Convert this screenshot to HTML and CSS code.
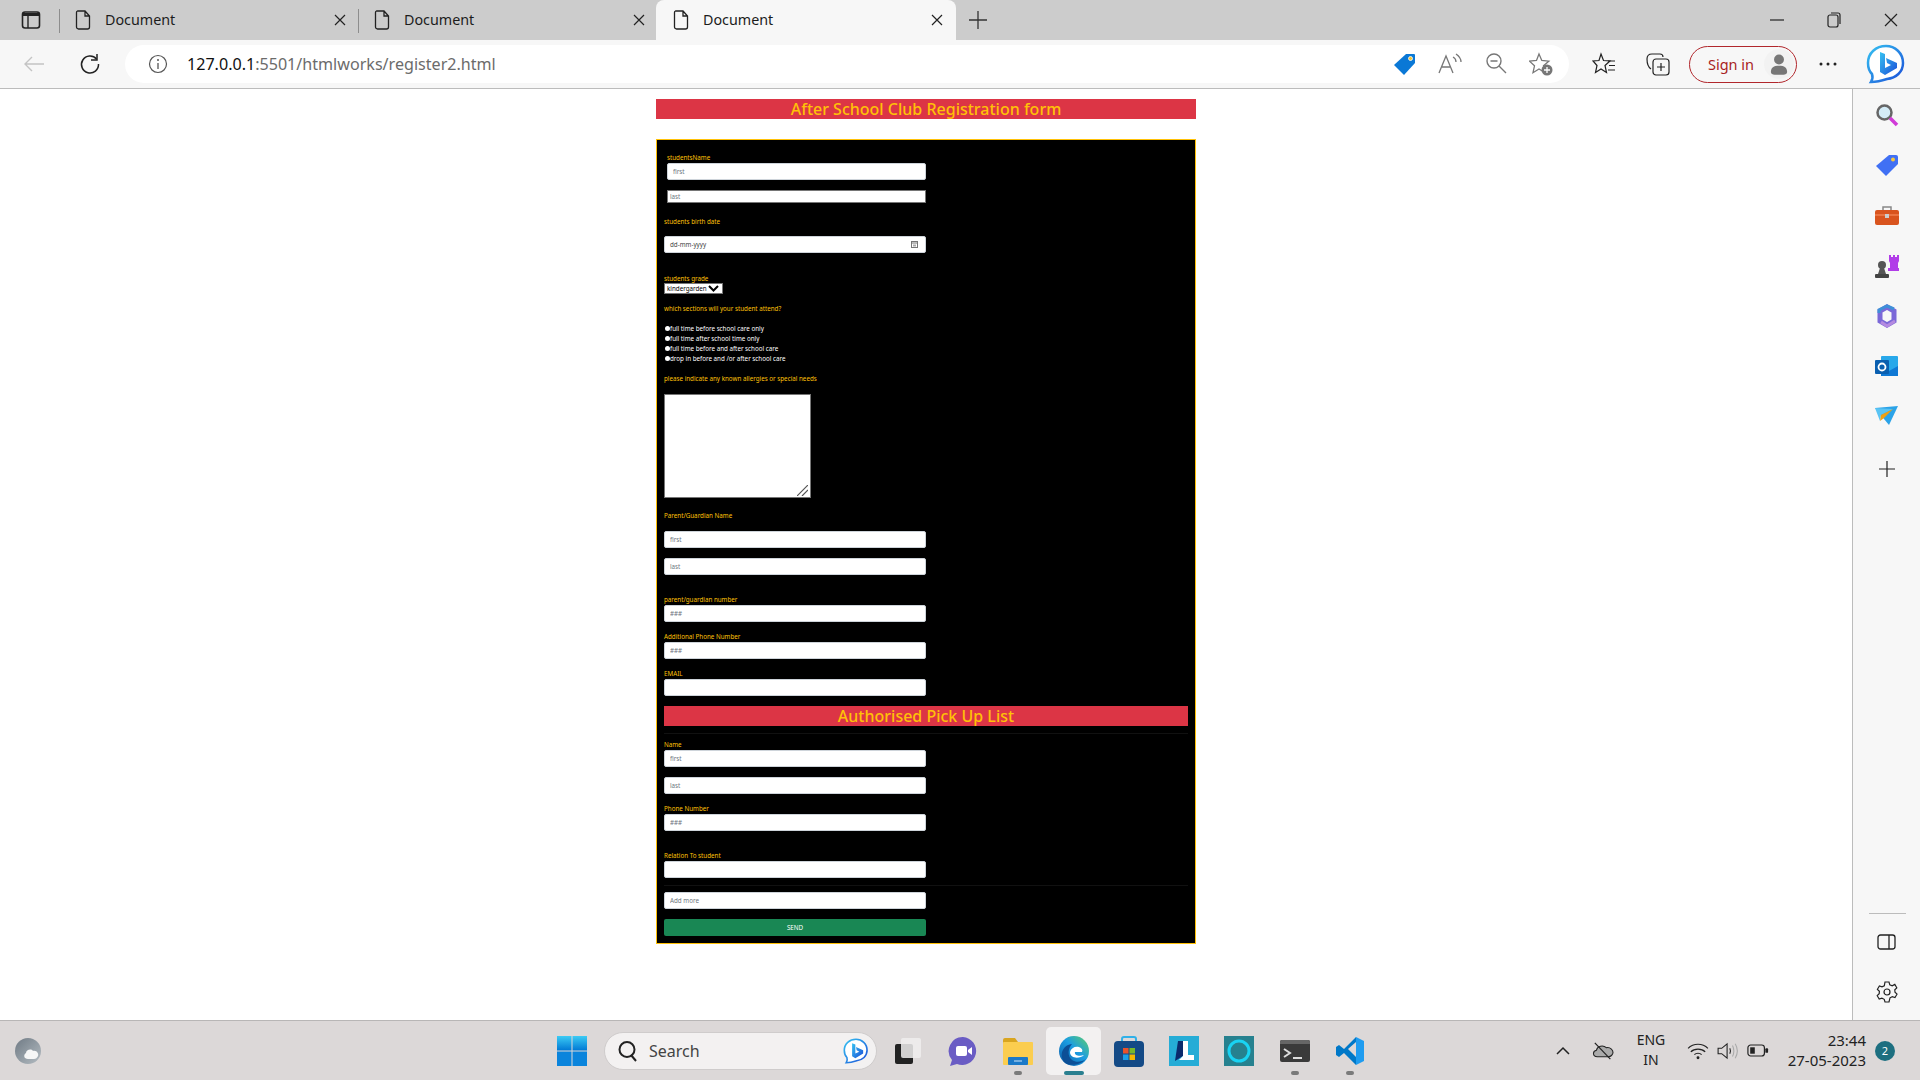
FILE: index.html
```html
<!DOCTYPE html>
<html>
<head>
	<title>Document</title>
	<link rel="stylesheet" href="styles.css">
</head>
<body>
	<svg class="defs" width="0" height="0">
		<defs>
			<linearGradient id="bingGrad" x1="0" y1="0" x2="1" y2="1">
				<stop offset="0" stop-color="#35c1f1"/>
				<stop offset="1" stop-color="#1b4fd8"/>
			</linearGradient>
			<linearGradient id="edgeGrad" x1="0" y1="1" x2="1" y2="0">
				<stop offset="0" stop-color="#0c59a4"/>
				<stop offset=".55" stop-color="#1b9de2"/>
				<stop offset="1" stop-color="#5fd068"/>
			</linearGradient>
			<linearGradient id="winGrad" x1="0" y1="0" x2="0" y2="1">
				<stop offset="0" stop-color="#3ccbf4"/>
				<stop offset="1" stop-color="#0078d4"/>
			</linearGradient>
			<linearGradient id="weatherGrad" x1="0" y1="0" x2="1" y2="1">
				<stop offset="0" stop-color="#6f7a84"/>
				<stop offset="1" stop-color="#b4bcc2"/>
			</linearGradient>
			<symbol id="doc" viewBox="0 0 16 20">
				<path d="M2.5 1H10l4.500 5V17a2 2 0 0 1-2 2h-9a2 2 0 0 1-2-2V2.500A1.500 1.500 0 0 1 2.500 1ZM10 1v5h4.500" fill="none" stroke="#222" stroke-width="1.300"/>
			</symbol>
			<symbol id="bing" viewBox="0 0 40 40">
				<path d="M20 2C29 2 37 9 37 19C37 28 30 34 21 35C15 37 9 38 5 38C7 35 7 33 6 30C3 27 2 23 2 19C2 9 10 2 20 2Z" fill="#fff" stroke="url(#bingGrad)" stroke-width="2.500"/>
				<path d="M14 8L19 10V24L25 21L21 19L20 14L31 19V24L19 31L14 28Z" fill="url(#bingGrad)"/>
			</symbol>
		</defs>
	</svg>

	<div class="tabstrip">
		<div class="panes-btn">
			<svg width="20" height="20" viewBox="0 0 20 20"><rect x="1.500" y="2" width="17" height="16" rx="2.500" fill="none" stroke="#222" stroke-width="1.600"/><path d="M2 3h16v3H2z" fill="#222"/><path d="M7 6v12" stroke="#222" stroke-width="1.400"/></svg>
		</div>
		<div class="tab">
			<svg class="doc-icon" width="16" height="20"><use href="#doc"/></svg>
			<span class="tab-title">Document</span>
			<svg class="tab-close" width="12" height="12" viewBox="0 0 12 12"><path d="M1 1l10 10M11 1L1 11" stroke="#222" stroke-width="1.200"/></svg>
		</div>
		<div class="tab">
			<svg class="doc-icon" width="16" height="20"><use href="#doc"/></svg>
			<span class="tab-title">Document</span>
			<svg class="tab-close" width="12" height="12" viewBox="0 0 12 12"><path d="M1 1l10 10M11 1L1 11" stroke="#222" stroke-width="1.200"/></svg>
		</div>
		<div class="tab tab-active">
			<svg class="doc-icon" width="16" height="20"><use href="#doc"/></svg>
			<span class="tab-title">Document</span>
			<svg class="tab-close" width="12" height="12" viewBox="0 0 12 12"><path d="M1 1l10 10M11 1L1 11" stroke="#222" stroke-width="1.200"/></svg>
		</div>
		<div class="new-tab">
			<svg width="18" height="18" viewBox="0 0 18 18"><path d="M9 0v18M0 9h18" stroke="#333" stroke-width="1.300"/></svg>
		</div>
		<div class="window-btns">
			<svg width="14" height="14" viewBox="0 0 14 14"><path d="M0 7h14" stroke="#222" stroke-width="1.200"/></svg>
			<svg width="14" height="16" viewBox="0 0 14 16"><rect x="1" y="3" width="10" height="12" rx="2" fill="none" stroke="#222" stroke-width="1.200"/><path d="M4 1h7a2 2 0 0 1 2 2v9" fill="none" stroke="#222" stroke-width="1.200"/></svg>
			<svg width="14" height="14" viewBox="0 0 14 14"><path d="M1 1l12 12M13 1L1 13" stroke="#222" stroke-width="1.200"/></svg>
		</div>
	</div>

	<div class="toolbar">
		<div class="tool">
			<svg width="22" height="18" viewBox="0 0 22 18"><path d="M21 9H2M9 2L2 9l7 7" fill="none" stroke="#c4c4c4" stroke-width="1.400"/></svg>
		</div>
		<div class="tool">
			<svg width="22" height="22" viewBox="0 0 22 22"><path d="M17.500 6A8.500 8.500 0 1 0 19.500 11" fill="none" stroke="#222" stroke-width="1.500"/><path d="M18 1v6h-6" fill="none" stroke="#222" stroke-width="1.500"/></svg>
		</div>
		<div class="address">
			<svg class="info-icon" width="22" height="22" viewBox="0 0 22 22"><circle cx="11" cy="11" r="8.500" fill="none" stroke="#555" stroke-width="1.200"/><path d="M11 10v6" stroke="#555" stroke-width="1.300"/><circle cx="11" cy="7" r="1" fill="#555"/></svg>
			<span class="url"><span class="url-host">127.0.0.1</span>:5501/htmlworks/register2.html</span>
			<div class="address-tools">
				<div class="addr-tool">
					<svg width="24" height="24" viewBox="0 0 24 24"><path d="M13 2h8a1 1 0 0 1 1 1v8L11 23 1 13Z" fill="#0a78d6"/><circle cx="17.500" cy="6.500" r="2" fill="#f4c430" stroke="#fff" stroke-width=".8"/></svg>
				</div>
				<div class="addr-tool">
					<svg width="24" height="22" viewBox="0 0 24 22"><path d="M1 21L8 4l7 17M4 15h8" fill="none" stroke="#777" stroke-width="1.300"/><path d="M15 5c2 1 3 2 3 5M18 2c3 2 5 4 5 8" fill="none" stroke="#777" stroke-width="1.300"/></svg>
				</div>
				<div class="addr-tool">
					<svg width="22" height="22" viewBox="0 0 22 22"><circle cx="9" cy="9" r="7" fill="none" stroke="#777" stroke-width="1.400"/><path d="M14 14l7 7M5.500 9h7" stroke="#777" stroke-width="1.400"/></svg>
				</div>
				<div class="addr-tool">
					<svg width="24" height="24" viewBox="0 0 24 24"><path d="M10 2l2.800 6.500 7 .7-5.300 4.600 1.500 6.900L10 17l-6 3.700 1.500-6.900L.5 9.200l7-.7Z" fill="none" stroke="#777" stroke-width="1.300"/><circle cx="18" cy="18" r="5.500" fill="#777"/><path d="M18 15v6M15 18h6" stroke="#fff" stroke-width="1.300"/></svg>
				</div>
			</div>
		</div>
		<div class="tool tool-fav">
			<svg width="24" height="24" viewBox="0 0 24 24"><path d="M9 2l2.500 6.500 6.500.5-5 4.500 1.500 7L9 17l-5.500 3.500 1.500-7-4-4.500 6-.5Z" fill="none" stroke="#222" stroke-width="1.200"/><path d="M16 9h7M17 13.500h6M16 18h7" stroke="#222" stroke-width="1.200"/></svg>
		</div>
		<div class="tool tool-coll">
			<svg width="24" height="24" viewBox="0 0 24 24"><path d="M5 17C2 15 1 12 1 7c0-3 2-5 5-5h8c2 0 3 1 3 3" fill="none" stroke="#222" stroke-width="1.200"/><rect x="7" y="7" width="16" height="16" rx="3" fill="none" stroke="#222" stroke-width="1.200"/><path d="M15 11v8M11 15h8" stroke="#222" stroke-width="1.200"/></svg>
		</div>
		<div class="signin">
			<span class="signin-text">Sign in</span>
			<span class="avatar">
				<svg width="18" height="22" viewBox="0 0 20 24"><circle cx="10" cy="7" r="5.500" fill="#777"/><path d="M1 21c0-5 3-7 9-7s9 2 9 7c0 2-2 3-4 3H5c-2 0-4-1-4-3Z" fill="#777"/></svg>
			</span>
		</div>
		<div class="tool tool-more">
			<svg width="18" height="4" viewBox="0 0 18 4"><circle cx="2" cy="2" r="1.500" fill="#222"/><circle cx="9" cy="2" r="1.500" fill="#222"/><circle cx="16" cy="2" r="1.500" fill="#222"/></svg>
		</div>
		<svg class="bing-btn" width="40" height="40"><use href="#bing"/></svg>
	</div>

	<div class="main">
		<div class="page">
			<div class="container">
				<h1 class="title">After School Club Registration form</h1>
				<form class="regform">
					<label class="lbl indent">studentsName</label>
					<input class="input indent-input" type="text" placeholder="first">
					<input class="input input-short indent-input mt-10" type="text" placeholder="last">

					<label class="lbl mt-13 mb-10">students birth date</label>
					<div class="input date-field">
						<span>dd-mm-yyyy</span>
						<svg width="7" height="7" viewBox="0 0 7 7"><rect x=".5" y=".5" width="6" height="6" fill="none" stroke="#777"/><path d="M0 2h7" stroke="#777"/><path d="M2 3.500h3v2H2z" fill="#aaa"/></svg>
					</div>

					<label class="lbl mt-20">students grade</label>
					<select class="grade">
						<option>kindergarden</option>
					</select>

					<p class="lbl mt-9">which sections will your student attend?</p>
					<div class="sections">
						<label class="section"><input type="radio" name="section">full time before school care only</label>
						<label class="section"><input type="radio" name="section">full time after school time only</label>
						<label class="section"><input type="radio" name="section">full time before and after school care</label>
						<label class="section"><input type="radio" name="section">drop in before and /or after school care</label>
					</div>

					<label class="lbl mt-10">please indicate any known allergies or special needs</label>
					<div class="notes-wrap">
						<textarea class="notes"></textarea>
						<svg class="notes-grip" width="11" height="11" viewBox="0 0 11 11"><path d="M0 11L11 0M5 11l6-6" stroke="#555" stroke-width="1.200"/></svg>
					</div>

					<label class="lbl mt-12 mb-11">Parent/Guardian Name</label>
					<input class="input" type="text" placeholder="first">
					<input class="input mt-10" type="text" placeholder="last">

					<label class="lbl mt-19">parent/guardian number</label>
					<input class="input" type="text" placeholder="###">
					<label class="lbl mt-9">Additional Phone Number</label>
					<input class="input" type="text" placeholder="###">
					<label class="lbl mt-9">EMAIL</label>
					<input class="input" type="text">

					<h2 class="subtitle">Authorised Pick Up List</h2>
					<hr class="rule">

					<label class="lbl mt-5">Name</label>
					<input class="input" type="text" placeholder="first">
					<input class="input mt-10" type="text" placeholder="last">
					<label class="lbl mt-9">Phone Number</label>
					<input class="input" type="text" placeholder="###">
					<label class="lbl mt-19">Relation To student</label>
					<input class="input" type="text">
					<hr class="rule">
					<input class="input mt-6" type="text" placeholder="Add more">
					<button class="send" type="submit">SEND</button>
				</form>
			</div>
		</div>

		<div class="sidebar">
			<div class="side-btn">
				<svg width="24" height="24" viewBox="0 0 24 24"><circle cx="9.500" cy="9.500" r="7" fill="#d4ecf7" stroke="#666" stroke-width="2.500"/><path d="M15 15l7 7" stroke="#d13bd8" stroke-width="3.500"/></svg>
			</div>
			<div class="side-btn">
				<svg width="24" height="24" viewBox="0 0 24 24"><path d="M14 2h7a2 2 0 0 1 2 2v7L11 23 1 13Z" fill="#4070f4"/><circle cx="18" cy="6.500" r="2" fill="#f5c842"/></svg>
			</div>
			<div class="side-btn">
				<svg width="24" height="20" viewBox="0 0 24 20"><path d="M8 5V2h8v3" fill="none" stroke="#888" stroke-width="1.500"/><rect y="5" width="24" height="15" rx="2" fill="#d9541e"/><path d="M0 10h24" stroke="#f08050" stroke-width="1.500"/><rect x="10" y="9" width="4" height="4" fill="#ccc"/></svg>
			</div>
			<div class="side-btn">
				<svg width="24" height="24" viewBox="0 0 24 24"><path d="M14 1h2v2h2V1h2v2h2V1h2v6l-1 2v5h2v3H13v-3h2V9l-1-2Z" fill="#b13de8"/><circle cx="7" cy="11" r="4" fill="#555"/><path d="M5 14h4l2 6H3Z" fill="#555"/><rect y="20" width="14" height="4" rx="1" fill="#444"/></svg>
			</div>
			<div class="side-btn">
				<svg width="22" height="24" viewBox="0 0 22 24"><path d="M11 3l7 4v10l-7 4-7-4V7Z" fill="none" stroke="#7b68d8" stroke-width="5"/><path d="M3 9V6l8-4 7 3" fill="none" stroke="#3f8fd8" stroke-width="3"/><path d="M5 18l6 4 8-5" fill="none" stroke="#b58ae0" stroke-width="3"/></svg>
			</div>
			<div class="side-btn">
				<svg width="24" height="24" viewBox="0 0 24 24"><rect x="6" y="2" width="17" height="20" rx="1" fill="#28a8ea"/><path d="M6 12l8 5 9-5v10H6Z" fill="#0f78d4"/><rect y="6" width="14" height="14" rx="1" fill="#0a5fb0"/><circle cx="7" cy="13" r="3.500" fill="none" stroke="#fff" stroke-width="1.800"/></svg>
			</div>
			<div class="side-btn">
				<svg width="24" height="20" viewBox="0 0 24 20"><path d="M0 2l23-2-9 19-5-6Z" fill="#2ba3e8"/><path d="M0 2l18 1L6 9 5 15Z" fill="#5ac4f4"/><path d="M18 3L6 9 5 15l4-3Z" fill="#f0a010"/></svg>
			</div>
			<div class="side-btn side-plus">
				<svg width="16" height="16" viewBox="0 0 16 16"><path d="M8 0v16M0 8h16" stroke="#222" stroke-width="1.200"/></svg>
			</div>
			<div class="side-bottom">
				<div class="side-rule"></div>
				<div class="side-btn">
					<svg width="20" height="18" viewBox="0 0 20 18"><rect x="1" y="2" width="17" height="14" rx="2.500" fill="none" stroke="#222" stroke-width="1.300"/><path d="M12 2v14" stroke="#222" stroke-width="1.300"/></svg>
				</div>
				<div class="side-btn">
					<svg width="22" height="22" viewBox="0 0 22 22"><path d="M9 1h4l.8 2.800 2.400 1 2.600-1.400 2 3.400-2 2 .2 2.400 2 2-2 3.400-2.700-1-2.300 1.200L13 21H9l-.8-2.700-2.300-1.200-2.700 1-2-3.400 2-2 .2-2.400-2-2 2-3.400L6 5.800l2.300-1Z" fill="none" stroke="#222" stroke-width="1.200"/><circle cx="11" cy="11" r="3" fill="none" stroke="#222" stroke-width="1.200"/></svg>
				</div>
			</div>
		</div>
	</div>

	<div class="taskbar">
		<svg class="weather" width="26" height="26" viewBox="0 0 26 26"><ellipse cx="13" cy="13" rx="13" ry="13" fill="url(#weatherGrad)"/><path d="M13 21c-4 0-5-4-2-6 0-3 5-5 7-2 4-1 6 3 5 5-1 2-2 3-4 3Z" fill="#f6f6f6"/></svg>
		<svg class="start" width="30" height="30" viewBox="0 0 30 30"><rect width="14.500" height="14.500" fill="url(#winGrad)"/><rect x="15.500" width="14.500" height="14.500" fill="url(#winGrad)"/><rect y="15.500" width="14.500" height="14.500" fill="#0a84dc"/><rect x="15.500" y="15.500" width="14.500" height="14.500" fill="#0a84dc"/></svg>
		<div class="search">
			<svg width="22" height="22" viewBox="0 0 22 22"><circle cx="10" cy="9.500" r="7.500" fill="none" stroke="#222" stroke-width="2"/><path d="M14 15l5 6" stroke="#222" stroke-width="2"/></svg>
			<span class="search-text">Search</span>
			<svg class="search-bing" width="26" height="26"><use href="#bing"/></svg>
		</div>
		<div class="task">
			<svg width="30" height="30" viewBox="0 0 30 30"><rect x="2" y="8" width="18" height="20" rx="2" fill="#222"/><rect x="8" y="2" width="20" height="20" rx="2" fill="#f0eeee" fill-opacity=".85"/></svg>
		</div>
		<div class="task">
			<svg width="30" height="30" viewBox="0 0 30 30"><path d="M15 1a14 14 0 1 1-6 27L2 30l2-6A14 14 0 0 1 15 1Z" fill="#6a5cc4"/><rect x="8" y="10" width="11" height="10" rx="2" fill="#fff"/><path d="M20 14l4-3v8l-4-3Z" fill="#fff"/></svg>
		</div>
		<div class="task running">
			<svg width="32" height="28" viewBox="0 0 32 28"><path d="M1 3a2 2 0 0 1 2-2h10l3 4h14v8H1Z" fill="#d9a520"/><rect x="1" y="5" width="30" height="23" rx="1" fill="#fbcd4f"/><rect x="6" y="20" width="20" height="8" rx="1" fill="#1b79c8"/><path d="M12 24h8" stroke="#cfe6f8" stroke-width="1"/></svg>
		</div>
		<div class="task task-active running">
			<svg width="32" height="32" viewBox="0 0 32 32"><circle cx="16" cy="16" r="15" fill="url(#edgeGrad)"/><path d="M6 27c-5-8-1-17 8-18-4 4-5 12 0 16 4 3 10 2 14-1-5 6-17 8-22 3Z" fill="#0c4f96"/><path d="M12 17c1-4 5-6 9-5 3 1 4 3 3 5h-7c-1 3 4 5 9 3-4 4-14 4-14-3Z" fill="#fff"/></svg>
		</div>
		<div class="task">
			<svg width="30" height="32" viewBox="0 0 30 32"><path d="M8 8V4a2 2 0 0 1 2-2h10a2 2 0 0 1 2 2v4" fill="none" stroke="#30b0e8" stroke-width="2"/><rect y="6" width="30" height="26" rx="4" fill="#144a86"/><rect x="9" y="13" width="5.500" height="5.500" fill="#e8532b"/><rect x="15.500" y="13" width="5.500" height="5.500" fill="#78b82a"/><rect x="9" y="19.500" width="5.500" height="5.500" fill="#1aa0e8"/><rect x="15.500" y="19.500" width="5.500" height="5.500" fill="#f5b800"/></svg>
		</div>
		<div class="task">
			<svg width="30" height="30" viewBox="0 0 30 30"><rect width="30" height="30" fill="#25acd6"/><path d="M9 5h5v15l-8 5Z" fill="#0b2a6b"/><path d="M14 5h5v14h6v5H10l4-4Z" fill="#fff"/></svg>
		</div>
		<div class="task">
			<svg width="30" height="30" viewBox="0 0 30 30"><rect width="30" height="30" fill="#26818f"/><circle cx="15" cy="15" r="10" fill="none" stroke="#19d3f3" stroke-width="3"/></svg>
		</div>
		<div class="task running">
			<svg width="30" height="26" viewBox="0 0 30 26"><rect width="30" height="22" y="2" rx="2" fill="#3a3a3a"/><path d="M0 4a2 2 0 0 1 2-2h26a2 2 0 0 1 2 2v2H0Z" fill="#666"/><path d="M4 11l6 4-6 4" fill="none" stroke="#ddd" stroke-width="2"/><path d="M13 20h9" stroke="#ddd" stroke-width="2"/></svg>
		</div>
		<div class="task running">
			<svg width="30" height="30" viewBox="0 0 30 30"><path d="M21 1l8 4v20l-8 4Z" fill="#1f9cf0"/><path d="M21 1L9 13 4 9l-3 2v8l3 2 5-4 12 12v-8l-8-8 8-7Z" fill="#0078c8"/></svg>
		</div>

		<svg class="tray-caret" width="20" height="10" viewBox="0 0 20 10"><path d="M4 8l6-6 6 6" fill="none" stroke="#222" stroke-width="1.500"/></svg>
		<svg class="tray-cloud" width="22" height="18" viewBox="0 0 26 22"><path d="M6 18c-6 0-6-7-1-8 1-5 8-7 12-3 5-1 9 3 8 7-1 3-3 4-5 4Z" fill="#aaa" stroke="#222" stroke-width="1.300"/><path d="M3 1l19 20" stroke="#222" stroke-width="1.500"/></svg>
		<div class="tray-lang"><span>ENG</span><span>IN</span></div>
		<svg class="tray-wifi" width="22" height="18" viewBox="0 0 24 20"><path d="M1 7c6-6 16-6 22 0M4 11c4-4 12-4 16 0M8 14c2-2 6-2 8 0" fill="none" stroke="#222" stroke-width="1.300"/><circle cx="12" cy="17.500" r="1.600" fill="#222"/></svg>
		<svg class="tray-sound" width="22" height="18" viewBox="0 0 24 20"><path d="M1 7h4l6-5v16l-6-5H1Z" fill="none" stroke="#222" stroke-width="1.200"/><path d="M14 7c1 2 1 4 0 6" fill="none" stroke="#222" stroke-width="1.200"/><path d="M17 4c2 4 2 8 0 12M20 2c3 5 3 11 0 16" fill="none" stroke="#aaa" stroke-width="1.200"/></svg>
		<svg class="tray-battery" width="22" height="13" viewBox="0 0 24 14"><rect x="1" y="1" width="18" height="12" rx="3" fill="none" stroke="#222" stroke-width="1.300"/><rect x="3.500" y="3.500" width="5" height="7" fill="#222"/><rect x="20" y="4.500" width="3" height="5" rx="1" fill="#222"/></svg>
		<div class="clock"><span>23:44</span><span>27-05-2023</span></div>
		<div class="badge">2</div>
	</div>
</body>
</html>
```

FILE: styles.css
```css
* {
  box-sizing: border-box;
}

body {
  margin: 0;
  height: 1080px;
  overflow: hidden;
  display: flex;
  flex-direction: column;
  font-family: "Noto Sans", "Open Sans", sans-serif;
  background: #fff;
}

.defs {
  position: absolute;
}

/* Browser tabs */
.tabstrip {
  height: 40px;
  flex: none;
  display: flex;
  background: #cccccc;
}

.panes-btn {
  width: 60px;
  display: flex;
  align-items: center;
  padding-left: 21px;
  position: relative;
}

.panes-btn::after {
  content: "";
  position: absolute;
  right: 0;
  top: 9px;
  height: 24px;
  width: 1px;
  background: #8d8d8d;
}

.tab {
  width: 299px;
  display: flex;
  align-items: center;
  padding: 0 13px 0 15px;
  position: relative;
  font-size: 14.300px;
  color: #1c1c1c;
}

.tab::after {
  content: "";
  position: absolute;
  right: 0;
  top: 9px;
  height: 24px;
  width: 1px;
  background: #8d8d8d;
}

.tab-active {
  width: 300px;
  margin-left: -2px;
  background: #f7f7f7;
  border-radius: 8px 8px 0 0;
  padding-left: 17px;
  padding-right: 13px;
}

.tab-active::after {
  display: none;
}

.doc-icon {
  flex: none;
}

.tab-title {
  flex: 1;
  margin: -2px 0 0 14px;
}

.new-tab {
  margin-left: 13px;
  display: flex;
  align-items: center;
}

.window-btns {
  margin-left: auto;
  display: flex;
  align-items: center;
  gap: 43px;
  padding-right: 22px;
}

/* Address bar */
.toolbar {
  height: 49px;
  flex: none;
  display: flex;
  align-items: center;
  padding: 0 0 0 6px;
  background: #f7f7f7;
  border-bottom: 1px solid #bcbcbc;
}

.tool {
  width: 56px;
  display: flex;
  justify-content: center;
  align-items: center;
  flex: none;
}

.address {
  width: 1444px;
  height: 38px;
  margin-left: 7px;
  display: flex;
  align-items: center;
  padding-left: 22px;
  background: #fff;
  border-radius: 19px;
  flex: none;
}

.url {
  margin-left: 18px;
  font-size: 16.100px;
  color: #6b6b6b;
}

.url-host {
  color: #111;
}

.address-tools {
  margin-left: auto;
  display: flex;
  padding-right: 5px;
}

.addr-tool {
  width: 45.500px;
  display: flex;
  justify-content: center;
}

.tool-fav {
  width: 44px;
  margin-left: 13px;
}

.tool-coll {
  width: 44px;
  margin-left: 10px;
}

.signin {
  width: 108px;
  height: 37px;
  margin-left: 9px;
  flex: none;
  display: flex;
  align-items: center;
  padding-left: 18px;
  border: 1.500px solid #b1272c;
  border-radius: 19px;
}

.signin-text {
  font-size: 14.500px;
  color: #a81e23;
}

.avatar {
  width: 30px;
  height: 30px;
  margin-left: auto;
  margin-right: 2px;
  border-radius: 50%;
  background: #f2f2f2;
  display: flex;
  align-items: center;
  justify-content: center;
}

.tool-more {
  width: 44px;
  margin-left: 9px;
}

.bing-btn {
  margin-left: 16px;
  flex: none;
}

/* Page + side panel */
.main {
  flex: 1;
  display: flex;
  min-height: 0;
}

.page {
  flex: 1;
  padding-top: 10px;
}

.container {
  width: 540px;
  margin: 0 auto;
}

.title {
  margin: 0;
  height: 20px;
  background: #dc3545;
  color: #ffc107;
  font-size: 16px;
  font-weight: 500;
  line-height: 21px;
  text-align: center;
}

.regform {
  margin-top: 20px;
  height: 805px;
  padding: 12px 7px 6px 7px;
  background: #000;
  border: 1px solid #ffc107;
}

.lbl {
  display: block;
  margin: 0;
  height: 10px;
  font-size: 6.250px;
  line-height: 11px;
  color: #ffc107;
}

.indent {
  padding-left: 3px;
}

.input {
  display: block;
  width: 262px;
  height: 17px;
  margin-top: 1px;
  padding: 0 5px;
  background: #fff;
  border: 1px solid #ced4da;
  border-radius: 2px;
  font-family: inherit;
  font-size: 6.250px;
  color: #444;
}

.input::placeholder {
  color: #6c757d;
}

.indent-input {
  width: 259px;
  margin-left: 3px;
}

.input-short {
  height: 13px;
  padding: 0 2px;
  border: 1px solid #767676;
  border-radius: 0;
}

.date-field {
  display: flex;
  align-items: center;
  justify-content: space-between;
  padding-right: 7px;
}

.grade {
  display: block;
  width: 59px;
  height: 11px;
  padding: 0 0 0 2px;
  appearance: none;
  font-family: inherit;
  font-size: 6.250px;
  color: #000;
  background: #fff url("data:image/svg+xml,%3Csvg xmlns='http://www.w3.org/2000/svg' width='11' height='7' viewBox='0 0 11 7'%3E%3Cpath d='M1 1l4.500 4.500L10 1' fill='none' stroke='%23000' stroke-width='2'/%3E%3C/svg%3E") no-repeat right 3px center;
  border: 1px solid #767676;
  border-radius: 0;
}

.sections {
  margin-top: 10px;
}

.section {
  display: flex;
  align-items: center;
  height: 10px;
  font-size: 6.250px;
  color: #fff;
}

.section input {
  appearance: none;
  width: 5px;
  height: 5px;
  margin: 0 0 0 1px;
  background: #fff;
  border-radius: 50%;
}

.notes-wrap {
  position: relative;
  width: 147px;
  height: 104px;
  margin-top: 11px;
}

.notes {
  display: block;
  width: 100%;
  height: 100%;
  resize: none;
  background: #fff;
  border: 1px solid #767676;
}

.notes-grip {
  position: absolute;
  right: 3px;
  bottom: 2px;
}

.subtitle {
  margin: 10px 0 0;
  height: 20px;
  background: #dc3545;
  color: #ffc107;
  font-size: 16px;
  font-weight: 500;
  line-height: 21px;
  text-align: center;
}

.rule {
  margin: 7px 0 0;
  height: 1px;
  border: 0;
  background: #111;
}

.send {
  display: block;
  width: 262px;
  height: 17px;
  margin-top: 10px;
  padding: 0;
  background: #198754;
  border: 0;
  border-radius: 2px;
  font-family: inherit;
  font-size: 6.250px;
  color: #fff;
}

.mt-5 { margin-top: 5px; }
.mt-6 { margin-top: 6px; }
.mt-9 { margin-top: 9px; }
.mt-10 { margin-top: 10px; }
.mt-12 { margin-top: 12px; }
.mt-13 { margin-top: 13px; }
.mt-19 { margin-top: 19px; }
.mt-20 { margin-top: 20px; }
.mb-10 { margin-bottom: 10px; }
.mb-11 { margin-bottom: 11px; }

.sidebar {
  width: 68px;
  flex: none;
  display: flex;
  flex-direction: column;
  padding-top: 1px;
  background: #f7f7f7;
  border-left: 1px solid #bcbcbc;
}

.side-btn {
  height: 50.200px;
  flex: none;
  display: flex;
  align-items: center;
  justify-content: center;
}

.side-plus {
  margin-top: 3px;
}

.side-bottom {
  margin-top: auto;
  padding-bottom: 3px;
}

.side-rule {
  height: 1px;
  margin: 0 14px 3px 16px;
  background: #bcbcbc;
}

/* Windows taskbar */
.taskbar {
  height: 60px;
  flex: none;
  display: flex;
  align-items: center;
  padding-right: 25px;
  background: #dcd8d8;
  border-top: 1px solid #b8b6b6;
}

.weather {
  margin-left: 15px;
  flex: none;
}

.start {
  margin-left: 516px;
  flex: none;
}

.search {
  width: 273px;
  height: 38px;
  margin-left: 17px;
  padding: 0 7px 0 12px;
  flex: none;
  display: flex;
  align-items: center;
  background: #f3f1f1;
  border-radius: 19px;
  border: 1px solid #cfcccc;
}

.search-text {
  margin-left: 10px;
  font-size: 16px;
  color: #444;
}

.search-bing {
  margin-left: auto;
}

.search + .task {
  margin-left: 3px;
}

.task {
  width: 55.300px;
  height: 48px;
  flex: none;
  display: flex;
  align-items: center;
  justify-content: center;
  position: relative;
}

.task-active {
  background: #f3f1f1;
  border-radius: 5px;
}

.running::after {
  content: "";
  position: absolute;
  left: 50%;
  bottom: 0;
  width: 8px;
  height: 4px;
  margin-left: -4px;
  border-radius: 2px;
  background: #7a7a7a;
}

.task-active::after {
  width: 20px;
  margin-left: -10px;
  background: #2a7f8f;
}

.tray-caret {
  margin-left: auto;
  flex: none;
}

.tray-cloud {
  margin-left: 19px;
  margin-right: 2px;
  flex: none;
}

.tray-lang {
  width: 42px;
  margin-left: 14px;
  margin-top: -2px;
  flex: none;
  display: flex;
  flex-direction: column;
  align-items: center;
  font-size: 14px;
  line-height: 20px;
  color: #222;
}

.tray-wifi {
  margin-left: 15px;
  margin-right: 1px;
  flex: none;
}

.tray-sound,
.tray-battery {
  margin-left: 7px;
  margin-right: 1px;
  flex: none;
}

.clock {
  width: 96px;
  margin-top: -2px;
  flex: none;
  display: flex;
  flex-direction: column;
  align-items: flex-end;
  font-size: 15px;
  line-height: 20px;
  color: #222;
}

.badge {
  width: 20px;
  height: 20px;
  margin-left: 9px;
  flex: none;
  border-radius: 50%;
  background: #1d6f80;
  color: #fff;
  font-size: 11px;
  line-height: 20px;
  text-align: center;
}
```
